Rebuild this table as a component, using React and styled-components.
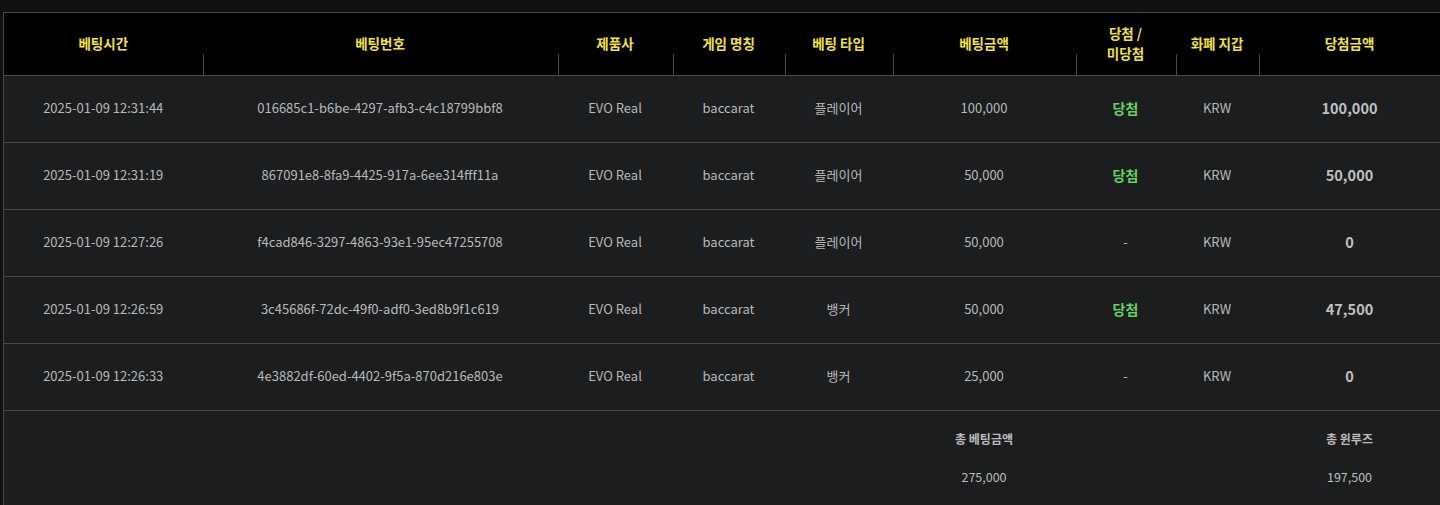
import React from "react";
import styled, { createGlobalStyle } from "styled-components";

const Global = createGlobalStyle`
  html, body { margin: 0; padding: 0; background: #111111; }
  body { font-family: "Noto Sans CJK KR", "Noto Sans", sans-serif; }
`;

const Wrap = styled.div`
  padding: 12px 0 0 3px;
  overflow: hidden;
`;

const Table = styled.table`
  width: 1437px;
  border-collapse: collapse;
  table-layout: fixed;
  border-top: 1px solid #4a4a4a;
  border-left: 1px solid #4a4a4a;
  background: #1c1d1f;
`;

const Th = styled.th`
  position: relative;
  height: 60px;
  padding: 0 4px 2px;
  background: #000;
  color: #f2e23a;
  font-size: 13.5px;
  font-weight: 700;
  line-height: 20px;
  text-align: center;
  vertical-align: middle;
  border-bottom: 1px solid #4a4a4a;
  &::before {
    content: "";
    display: ${(p) => (p.$sep ? "block" : "none")};
    position: absolute;
    left: 0;
    bottom: 0;
    width: 1px;
    height: 21px;
    background: #4a4a4a;
  }
`;

const Td = styled.td`
  height: 63px;
  padding: 0 0 3px;
  text-align: center;
  vertical-align: middle;
  color: #b9b9b9;
  font-size: 13px;
  border-bottom: 1px solid #4a4a4a;
  white-space: nowrap;
`;

const Win = styled.span`
  color: #62d45f;
  font-weight: 700;
  font-size: 14px;
`;

const Amount = styled.span`
  color: #c0c0c0;
  font-weight: 600;
  font-size: 14.5px;
`;

const FootCell = styled.td`
  height: 94px;
  padding: 0;
  text-align: center;
  vertical-align: top;
  color: #bdbdbd;
`;

const FootStack = styled.div`
  display: flex;
  flex-direction: column;
  align-items: center;
  gap: 20px;
  padding-top: 18px;
`;

const FootLabel = styled.span`
  font-size: 12px;
  font-weight: 700;
  line-height: 19px;
`;

const FootValue = styled.span`
  font-size: 12.5px;
  line-height: 19px;
  margin-top: -1px;
`;

const cols = [199, 355, 115, 112, 108, 183, 100, 83, 182];
const heads = [
  "베팅시간",
  "베팅번호",
  "제품사",
  "게임 명칭",
  "베팅 타입",
  "베팅금액",
  <>당첨 /<br />미당첨</>,
  "화폐 지갑",
  "당첨금액",
];

const rows = [
  ["2025-01-09 12:31:44", "016685c1-b6be-4297-afb3-c4c18799bbf8", "플레이어", "100,000", true, "100,000"],
  ["2025-01-09 12:31:19", "867091e8-8fa9-4425-917a-6ee314fff11a", "플레이어", "50,000", true, "50,000"],
  ["2025-01-09 12:27:26", "f4cad846-3297-4863-93e1-95ec47255708", "플레이어", "50,000", false, "0"],
  ["2025-01-09 12:26:59", "3c45686f-72dc-49f0-adf0-3ed8b9f1c619", "뱅커", "50,000", true, "47,500"],
  ["2025-01-09 12:26:33", "4e3882df-60ed-4402-9f5a-870d216e803e", "뱅커", "25,000", false, "0"],
];

export default function App() {
  return (
    <Wrap>
      <Global />
      <Table>
        <colgroup>
          {cols.map((w, i) => (
            <col key={i} style={{ width: w }} />
          ))}
        </colgroup>
        <thead>
          <tr>
            {heads.map((h, i) => (
              <Th key={i} $sep={i > 0}>{h}</Th>
            ))}
          </tr>
        </thead>
        <tbody>
          {rows.map((r, i) => (
            <tr key={i}>
              <Td>{r[0]}</Td>
              <Td>{r[1]}</Td>
              <Td>EVO Real</Td>
              <Td>baccarat</Td>
              <Td>{r[2]}</Td>
              <Td>{r[3]}</Td>
              <Td>{r[4] ? <Win>당첨</Win> : "-"}</Td>
              <Td>KRW</Td>
              <Td><Amount>{r[5]}</Amount></Td>
            </tr>
          ))}
          <tr>
            <FootCell colSpan={5} />
            <FootCell>
              <FootStack>
                <FootLabel>총 베팅금액</FootLabel>
                <FootValue>275,000</FootValue>
              </FootStack>
            </FootCell>
            <FootCell colSpan={2} />
            <FootCell>
              <FootStack>
                <FootLabel>총 윈루즈</FootLabel>
                <FootValue>197,500</FootValue>
              </FootStack>
            </FootCell>
          </tr>
        </tbody>
      </Table>
    </Wrap>
  );
}
